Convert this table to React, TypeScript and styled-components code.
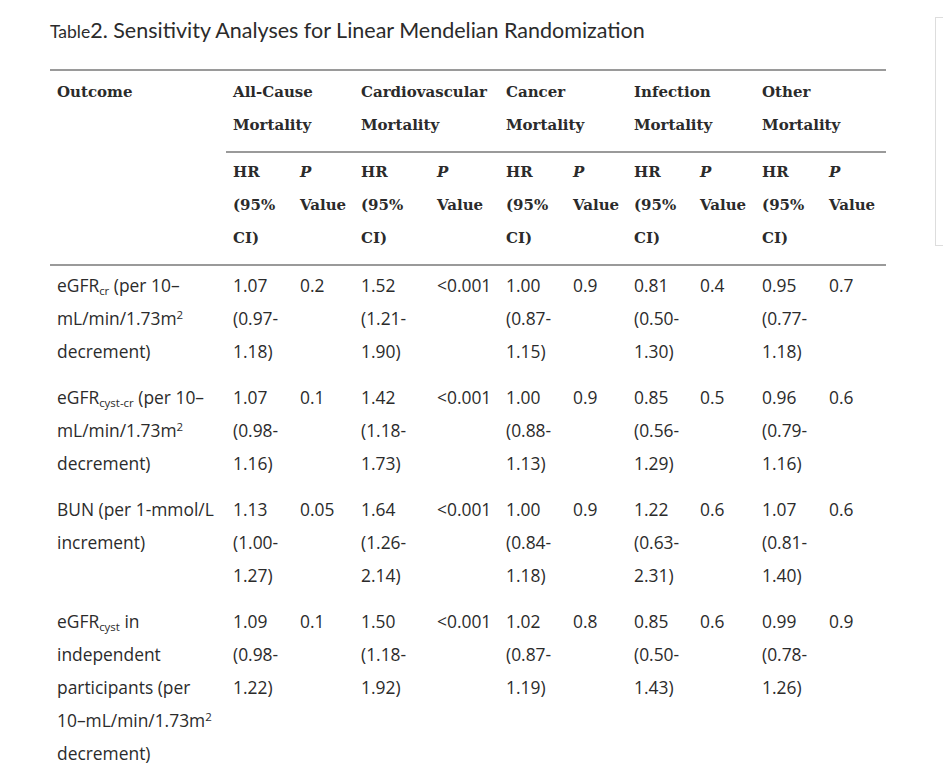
import React from "react";
import styled, { createGlobalStyle } from "styled-components";

const GlobalStyle = createGlobalStyle`
  html, body {
    margin: 0;
    padding: 0;
    background: #fff;
    overflow: hidden;
  }
`;

type Cell = { hr: string[]; p: string };
type Row = { outcome: React.ReactNode[]; cells: Cell[] };

const groups = [
  ["All-Cause", "Mortality"],
  ["Cardiovascular", "Mortality"],
  ["Cancer", "Mortality"],
  ["Infection", "Mortality"],
  ["Other", "Mortality"],
];

const colWidths = [176, 67, 61, 76, 69, 67, 61, 66, 62, 67, 64];

const Sub = styled.sub`
  font-size: 0.66em;
  vertical-align: -0.28em;
  line-height: 0;
`;

const Sup = styled.sup`
  font-size: 0.66em;
  vertical-align: 0.55em;
  line-height: 0;
`;

const unit = (
  <>
    mL/min/1.73m<Sup>2</Sup>
  </>
);

const rows: Row[] = [
  {
    outcome: [
      <>
        eGFR<Sub>cr</Sub> (per 10–
      </>,
      unit,
      "decrement)",
    ],
    cells: [
      { hr: ["1.07", "(0.97-", "1.18)"], p: "0.2" },
      { hr: ["1.52", "(1.21-", "1.90)"], p: "<0.001" },
      { hr: ["1.00", "(0.87-", "1.15)"], p: "0.9" },
      { hr: ["0.81", "(0.50-", "1.30)"], p: "0.4" },
      { hr: ["0.95", "(0.77-", "1.18)"], p: "0.7" },
    ],
  },
  {
    outcome: [
      <>
        eGFR<Sub>cyst-cr</Sub> (per 10–
      </>,
      unit,
      "decrement)",
    ],
    cells: [
      { hr: ["1.07", "(0.98-", "1.16)"], p: "0.1" },
      { hr: ["1.42", "(1.18-", "1.73)"], p: "<0.001" },
      { hr: ["1.00", "(0.88-", "1.13)"], p: "0.9" },
      { hr: ["0.85", "(0.56-", "1.29)"], p: "0.5" },
      { hr: ["0.96", "(0.79-", "1.16)"], p: "0.6" },
    ],
  },
  {
    outcome: ["BUN (per 1-mmol/L", "increment)"],
    cells: [
      { hr: ["1.13", "(1.00-", "1.27)"], p: "0.05" },
      { hr: ["1.64", "(1.26-", "2.14)"], p: "<0.001" },
      { hr: ["1.00", "(0.84-", "1.18)"], p: "0.9" },
      { hr: ["1.22", "(0.63-", "2.31)"], p: "0.6" },
      { hr: ["1.07", "(0.81-", "1.40)"], p: "0.6" },
    ],
  },
  {
    outcome: [
      <>
        eGFR<Sub>cyst</Sub> in
      </>,
      "independent",
      "participants (per",
      <>
        10–mL/min/1.73m<Sup>2</Sup>
      </>,
      "decrement)",
    ],
    cells: [
      { hr: ["1.09", "(0.98-", "1.22)"], p: "0.1" },
      { hr: ["1.50", "(1.18-", "1.92)"], p: "<0.001" },
      { hr: ["1.02", "(0.87-", "1.19)"], p: "0.8" },
      { hr: ["0.85", "(0.50-", "1.43)"], p: "0.6" },
      { hr: ["0.99", "(0.78-", "1.26)"], p: "0.9" },
    ],
  },
];

function Lines({ items }: { items: React.ReactNode[] }) {
  return (
    <>
      {items.map((item, i) => (
        <Line key={i}>{item}</Line>
      ))}
    </>
  );
}

function App() {
  return (
    <>
      <GlobalStyle />
      <Page>
        <Content>
          <Caption>
            <small>Table</small>2. Sensitivity Analyses for Linear Mendelian Randomization
          </Caption>
          <Table>
            <colgroup>
              {colWidths.map((w, i) => (
                <col key={i} style={{ width: w }} />
              ))}
            </colgroup>
            <thead>
              <tr>
                <GroupCell rowSpan={2}>
                  <Lines items={["Outcome"]} />
                </GroupCell>
                {groups.map((g, i) => (
                  <GroupCell key={i} colSpan={2}>
                    <Lines items={g} />
                  </GroupCell>
                ))}
              </tr>
              <tr>
                {groups.map((_, i) => (
                  <React.Fragment key={i}>
                    <HeadCell>
                      <Lines items={["HR", "(95%", "CI)"]} />
                    </HeadCell>
                    <HeadCell>
                      <Lines items={[<em>P</em>, "Value"]} />
                    </HeadCell>
                  </React.Fragment>
                ))}
              </tr>
            </thead>
            <tbody>
              {rows.map((row, i) => (
                <tr key={i}>
                  <BodyCell>
                    <Lines items={row.outcome} />
                  </BodyCell>
                  {row.cells.map((c, j) => (
                    <React.Fragment key={j}>
                      <BodyCell>
                        <Lines items={c.hr} />
                      </BodyCell>
                      <BodyCell>
                        <Lines items={[c.p]} />
                      </BodyCell>
                    </React.Fragment>
                  ))}
                </tr>
              ))}
            </tbody>
          </Table>
        </Content>
        <SidePanel />
      </Page>
    </>
  );
}

const Page = styled.div`
  display: flex;
  align-items: flex-start;
  padding: 0 0 0 50px;
  width: 943px;
  box-sizing: border-box;
  color: #2b2b2b;
`;

const Content = styled.div`
  width: 836px;
  flex-shrink: 0;
`;

const Caption = styled.div`
  font-family: Lato, "Liberation Sans", sans-serif;
  font-size: 21.5px;
  line-height: 26px;
  padding-top: 17px;
  height: 69px;
  box-sizing: border-box;
  color: #2b2b2b;
  white-space: nowrap;

  small {
    font-size: 17.5px;
  }
`;

const Table = styled.table`
  width: 836px;
  table-layout: fixed;
  border-collapse: collapse;
  border-top: 2px solid #9a9a9a;
`;

const Line = styled.div`
  white-space: nowrap;
  height: 33px;
  line-height: 33px;
`;

const HeadCell = styled.th`
  font-family: "DejaVu Serif", "Liberation Serif", serif;
  font-weight: bold;
  font-size: 15px;
  text-align: left;
  vertical-align: top;
  padding: 3px 7px 9px;
  color: #2b2b2b;
  border-bottom: 2px solid #9a9a9a;

  em {
    font-style: italic;
  }
`;

const GroupCell = styled(HeadCell)`
  padding: 5px 7px 9px;
`;

const BodyCell = styled.td`
  font-family: "Open Sans", "Liberation Sans", sans-serif;
  font-size: 17.4px;
  vertical-align: top;
  padding: 3px 7px 10px;
  color: #2b2b2b;
`;

const SidePanel = styled.div`
  margin: 17px 0 0 49px;
  width: 40px;
  height: 227px;
  flex-shrink: 0;
  border: 1px solid #ddd;
  border-right: none;
`;

export default App;
